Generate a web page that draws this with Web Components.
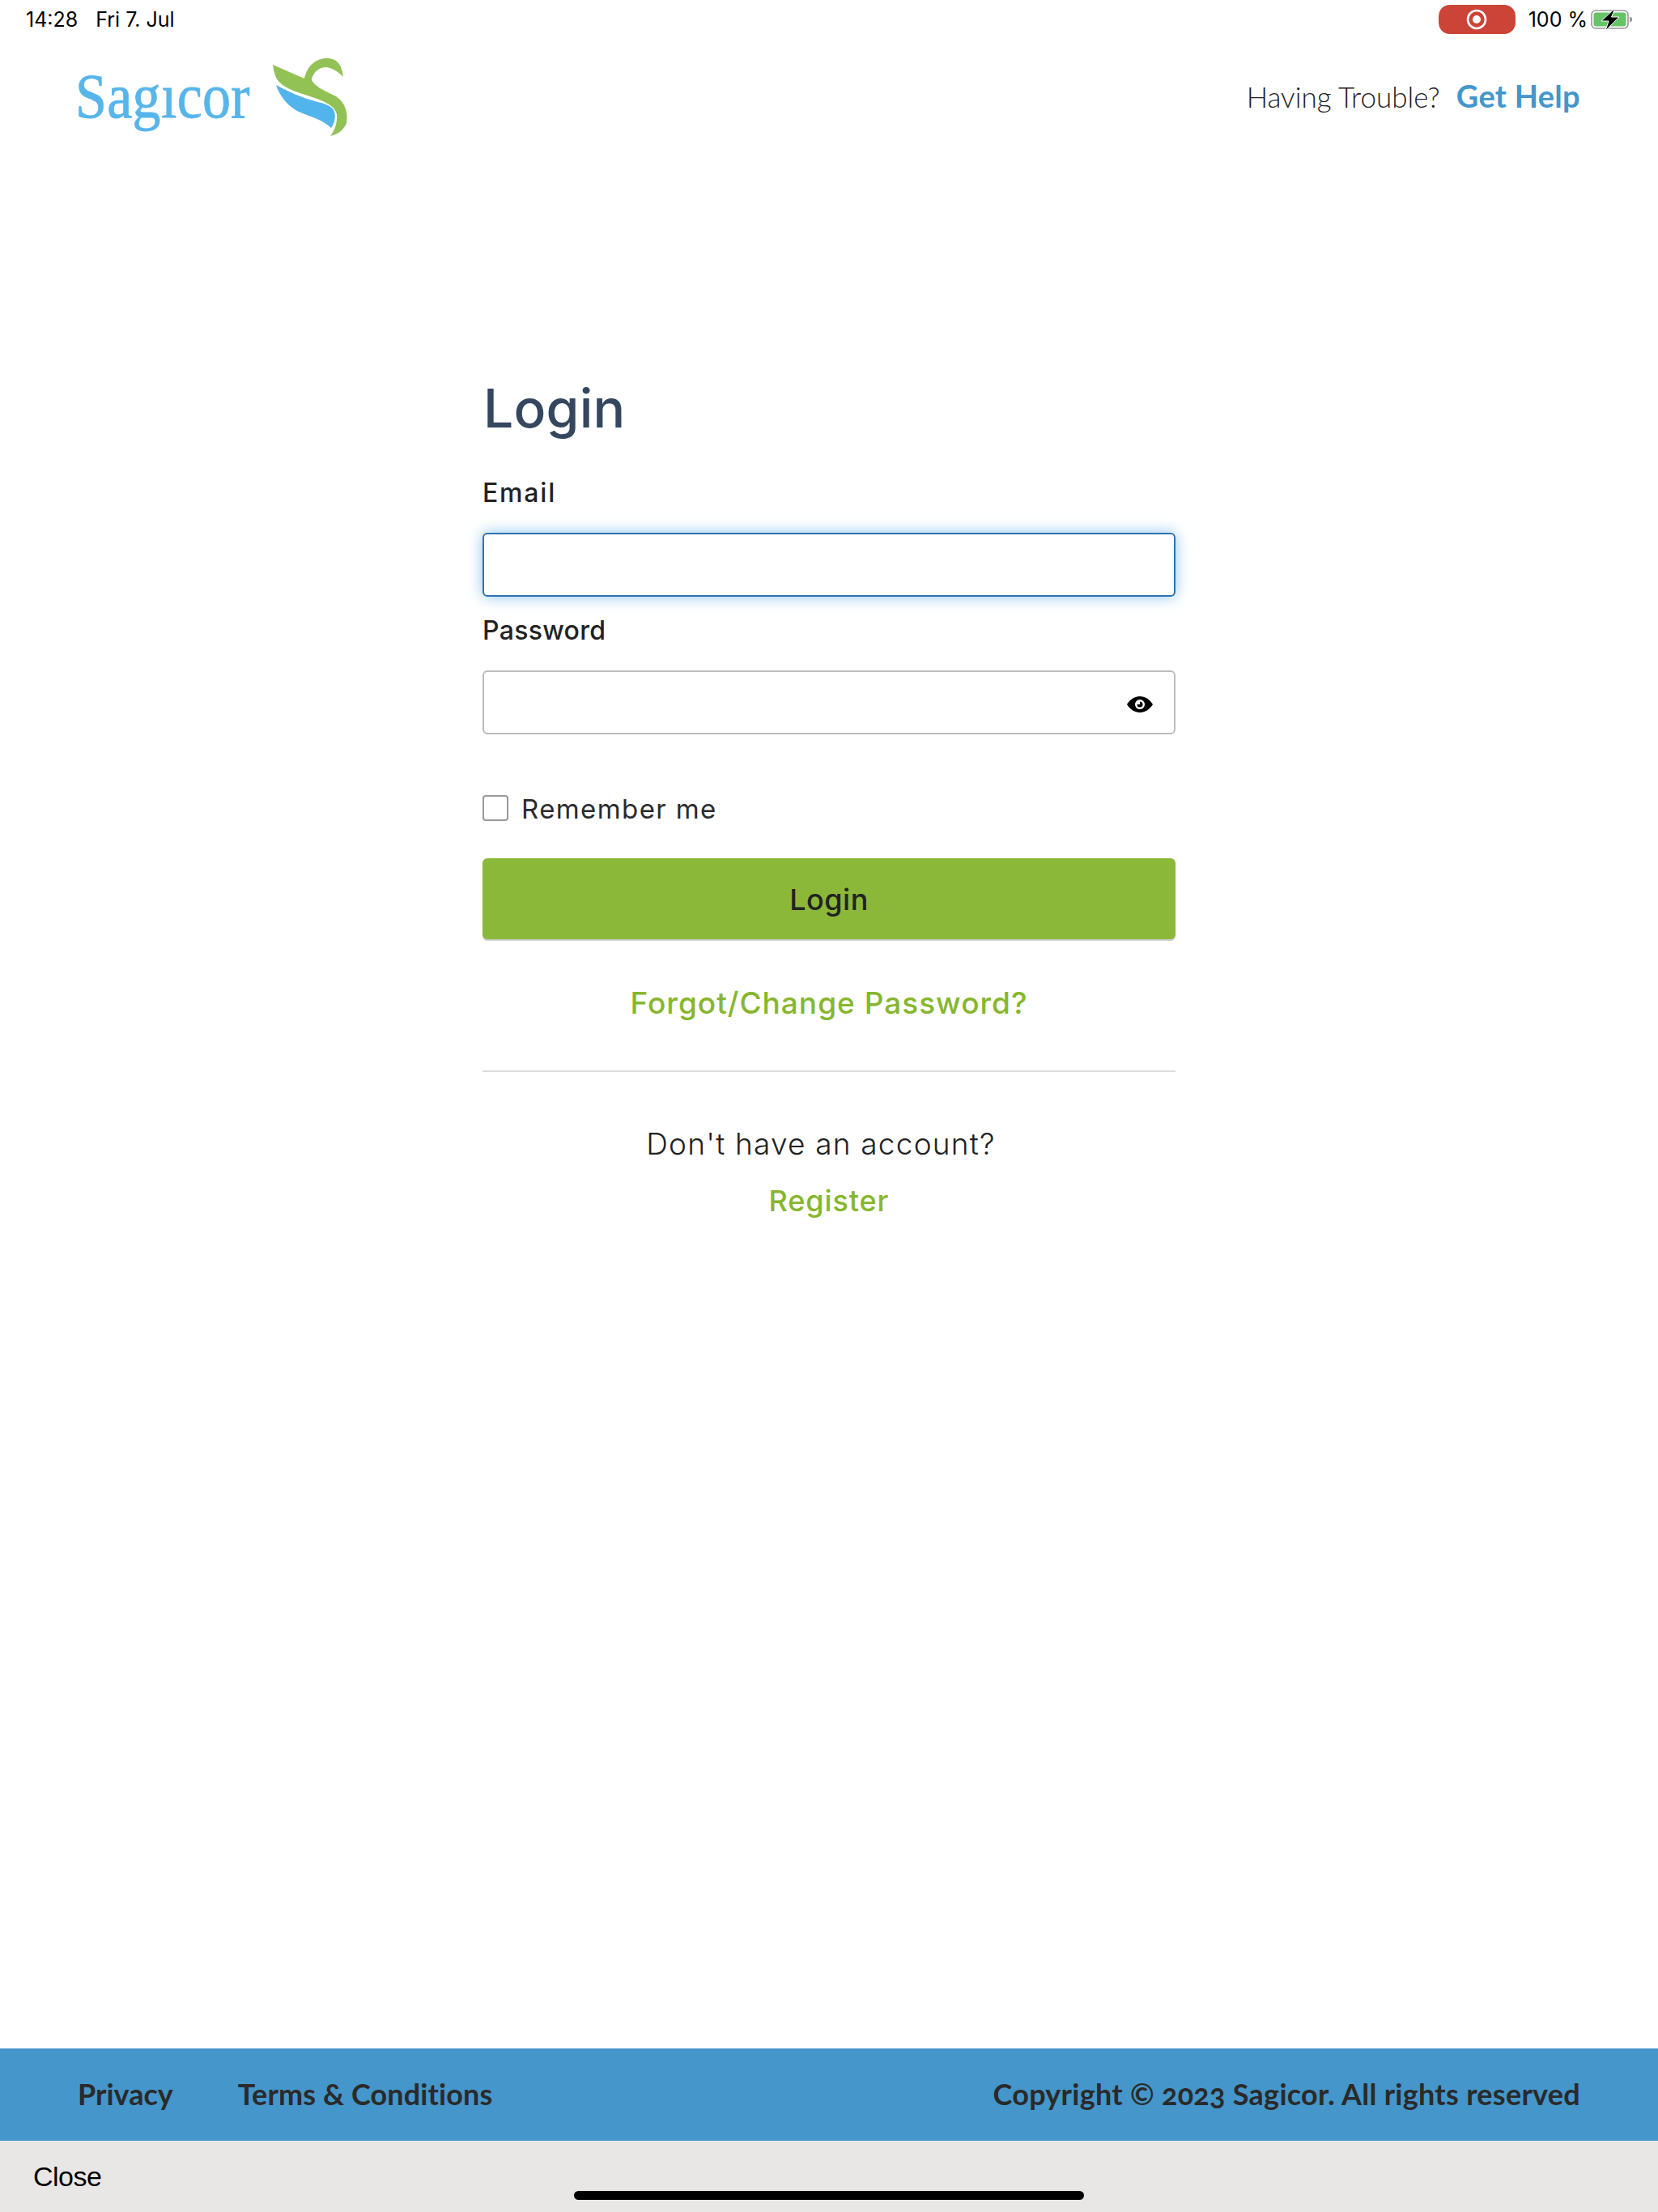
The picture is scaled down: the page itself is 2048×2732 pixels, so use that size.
<!DOCTYPE html>
<html lang="en">
<head>
<meta charset="utf-8">
<title>Sagicor Login</title>
<style>
html, body { margin: 0; padding: 0; background: #fff; }
</style>
</head>
<body>
<login-page></login-page>
<script>
class StatusBar extends HTMLElement {
    constructor() {
        super();
        this.attachShadow({ mode: "open" });
        this.shadowRoot.innerHTML = `
			<style>
			:host {
				display: flex;
				justify-content: space-between;
				height: 46px;
				padding: 0 30px 0 32px;
				font: 400 25px/48px Inter, sans-serif;
				color: #000;
			}
			.left { display: flex; gap: 22px; }
			.right { display: flex; align-items: flex-start; }
			.pill {
				display: flex;
				align-items: center;
				justify-content: center;
				width: 95px;
				height: 36px;
				margin: 6px 16px 0 0;
				border-radius: 14px;
				background: #cb4437;
			}
			.battery { margin: 10px 0 0 4px; }
			</style>
			<div class="left"><span>14:28</span><span>Fri 7. Jul</span></div>
			<div class="right">
				<div class="pill">
					<svg width="26" height="26" viewBox="0 0 26 26"><circle cx="13" cy="13" r="11" fill="none" stroke="#fff" stroke-width="2.6"/><circle cx="13" cy="13" r="5" fill="#fff"/></svg>
				</div>
				<span>100 %</span>
				<svg class="battery" width="53" height="28" viewBox="0 0 53 28">
					<rect x="1" y="3" width="45" height="22" rx="5" fill="none" stroke="#999" stroke-width="1.6"/>
					<rect x="3.500" y="5.500" width="40" height="17" rx="3" fill="#65c466"/>
					<path d="M48 10.500c2 .4 3.200 1.800 3.200 3.500s-1.200 3.100-3.200 3.500z" fill="#999"/>
					<path d="M30 0L13 16h9l-4 12L35 11h-9.500z" fill="#000" stroke="#fff" stroke-width="1"/>
				</svg>
			</div>
		`;
    }
}

class SiteHeader extends HTMLElement {
    constructor() {
        super();
        this.attachShadow({ mode: "open" });
        this.shadowRoot.innerHTML = `
			<style>
			:host {
				display: flex;
				justify-content: space-between;
				align-items: flex-start;
				height: 144px;
				padding: 0 96px 0 93px;
			}
			.logo { display: flex; align-items: flex-start; margin-top: 22px; }
			.word {
				font: 400 70px/80px "Liberation Serif", serif;
				letter-spacing: 0.3px;
				color: #57b5ea;
				margin-top: 14px;
				-webkit-text-stroke: 0.7px #57b5ea;
				transform: scaleY(1.12);
				transform-origin: 0 64px;
			}
			.mark { margin-left: 22px; }
			.help {
				display: flex;
				align-items: baseline;
				gap: 20px;
				margin-top: 50px;
				line-height: 44px;
				font-family: Lato, sans-serif;
			}
			.trouble { font-size: 35px; font-weight: 300; color: #222; }
			.get { font-size: 38px; font-weight: 700; letter-spacing: 0.3px; color: #4496cb; }
			</style>
			<div class="logo">
				<span class="word">Sagıcor</span>
				<svg class="mark" width="100" height="104" viewBox="0 0 100 104">
					<path fill="#92c255" d="M6 12L45 29C47 19 54 6 70 4C82 3 91 8 93 27C88 22 80 15 70 15C61 16 55 23 54 31C58 39 70 44 84 51C96 59 99 72 97 84C94 92 87 98 77 100C82 94 86 84 85 73C82 63 72 58 58 53C40 47 20 42 12 31C8 25 7 18 6 12Z"/>
					<path fill="#52b4ec" d="M10 37C25 45 40 52 58 57C70 60 80 63 82 70C84 78 82 84 78 90C68 80 52 76 38 70C26 64 15 52 10 37Z"/>
				</svg>
			</div>
			<div class="help"><span class="trouble">Having Trouble?</span><span class="get">Get Help</span></div>
		`;
    }
}

class FormField extends HTMLElement {
    constructor() {
        super();
        this.attachShadow({ mode: "open" });
        this.shadowRoot.innerHTML = `
			<style>
			:host { display: block; }
			label {
				display: block;
				height: 40px;
				margin-bottom: 29px;
				font: 500 32px/40px Inter, sans-serif;
				letter-spacing: var(--track, 0.3px);
				color: #222;
			}
			.box {
				position: relative;
				box-sizing: border-box;
				height: 79px;
				border: 2px solid #bbb;
				border-radius: 6px;
				background: #fff;
			}
			:host([focused]) .box {
				border-color: #2f72b0;
				box-shadow: 0 0 18px rgba(102, 175, 233, 0.75);
			}
			input {
				box-sizing: border-box;
				width: 100%;
				height: 100%;
				padding: 0 24px;
				border: 0;
				outline: 0;
				background: transparent;
				font: 400 31px Inter, sans-serif;
			}
			.box ::slotted(svg) {
				position: absolute;
				top: 30px;
				right: 26px;
			}
			</style>
			<label></label>
			<div class="box"><input><slot></slot></div>
		`;
    }
    connectedCallback() {
        this.shadowRoot.querySelector("label").textContent = this.getAttribute("label");
        this.shadowRoot.querySelector("input").type = this.getAttribute("type") || "text";
    }
}

class LoginForm extends HTMLElement {
    constructor() {
        super();
        this.attachShadow({ mode: "open" });
        this.shadowRoot.innerHTML = `
			<style>
			:host {
				display: block;
				width: 856px;
				margin: 273px auto 0;
				font-family: Inter, sans-serif;
			}
			h1 {
				margin: 0 0 44px;
				padding-left: 1px;
				font: 500 66px/82px Inter, sans-serif;
				letter-spacing: 0.2px;
				color: #34475f;
			}
			form-field + form-field { margin-top: 22px; }
			.remember {
				display: flex;
				align-items: center;
				gap: 16px;
				height: 32px;
				margin-top: 75px;
				font-size: 33px;
				font-weight: 400;
				letter-spacing: 1.4px;
				line-height: 32px;
				color: #2b2b2b;
			}
			.remember span:last-child { padding-top: 2px; }
			.check {
				box-sizing: border-box;
				width: 32px;
				height: 32px;
				border: 2px solid #999;
				border-radius: 4px;
			}
			button {
				display: block;
				width: 100%;
				height: 100px;
				margin-top: 46px;
				padding-top: 3px;
				border: 0;
				border-radius: 6px;
				background: #8bb839;
				box-shadow: 0 2px 1px #ccc;
				font: 500 36px Inter, sans-serif;
				letter-spacing: 0.5px;
				color: #222;
			}
			.link {
				display: block;
				text-align: center;
				color: #87b62e;
				font-weight: 500;
			}
			.forgot {
				margin-top: 54px;
				font-size: 37px;
				line-height: 50px;
				letter-spacing: 1px;
			}
			hr {
				height: 2px;
				margin: 58px 0 0;
				border: 0;
				background: #ddd;
			}
			.ask {
				margin: 64px 20px 0 0;
				text-align: center;
				font-size: 37px;
				font-weight: 300;
				line-height: 50px;
				letter-spacing: 1.2px;
				color: #222;
			}
			.register {
				margin-top: 23px;
				font-size: 36px;
				line-height: 44px;
				letter-spacing: 0.9px;
			}
			</style>
			<h1>Login</h1>
			<form-field label="Email" focused style="--track: 1.800px"></form-field>
			<form-field label="Password" type="password">
				<svg width="32" height="20" viewBox="0 0 32 20">
					<path d="M0 10C4 3.500 10 0 16 0s12 3.500 16 10c-4 6.500-10 10-16 10S4 16.500 0 10z" fill="#000"/>
					<circle cx="16" cy="10" r="6" fill="#fff"/>
					<path d="M16 6.500a3.500 3.500 0 1 1-3.500 3.500h3.500z" fill="#000"/>
				</svg>
			</form-field>
			<div class="remember"><span class="check"></span><span>Remember me</span></div>
			<button type="button">Login</button>
			<a class="link forgot">Forgot/Change Password?</a>
			<hr>
			<div class="ask">Don't have an account?</div>
			<a class="link register">Register</a>
		`;
    }
}

class SiteFooter extends HTMLElement {
    constructor() {
        super();
        this.attachShadow({ mode: "open" });
        this.shadowRoot.innerHTML = `
			<style>
			:host {
				display: flex;
				justify-content: space-between;
				align-items: center;
				height: 114px;
				padding: 0 96px 3px;
				box-sizing: border-box;
				background: #4496cb;
				font: 700 36px/44px Lato, sans-serif;
				font-variant-numeric: oldstyle-nums;
				color: #2a2a2a;
			}
			.links { display: flex; gap: 80px; }
			.links span:last-child { letter-spacing: 0.1px; }
			.copy { letter-spacing: 0.27px; }
			</style>
			<div class="links"><span>Privacy</span><span>Terms &amp; Conditions</span></div>
			<span class="copy">Copyright © 2023 Sagicor. All rights reserved</span>
		`;
    }
}

class CloseBar extends HTMLElement {
    constructor() {
        super();
        this.attachShadow({ mode: "open" });
        this.shadowRoot.innerHTML = `
			<style>
			:host {
				position: relative;
				display: flex;
				align-items: center;
				height: 88px;
				padding-left: 41px;
				background: #e8e7e6;
				font: 400 34px "Liberation Sans", sans-serif;
				letter-spacing: -0.5px;
				color: #000;
			}
			.home {
				position: absolute;
				left: 709px;
				top: 62px;
				width: 630px;
				height: 11px;
				border-radius: 6px;
				background: #000;
			}
			</style>
			<span>Close</span>
			<div class="home"></div>
		`;
    }
}

class LoginPage extends HTMLElement {
    constructor() {
        super();
        this.attachShadow({ mode: "open" });
        this.shadowRoot.innerHTML = `
			<style>
			:host {
				display: flex;
				flex-direction: column;
				width: 2048px;
				height: 2732px;
				background: #fff;
				overflow: hidden;
			}
			main { flex: 1; }
			</style>
			<status-bar></status-bar>
			<site-header></site-header>
			<main><login-form></login-form></main>
			<site-footer></site-footer>
			<close-bar></close-bar>
		`;
    }
}

customElements.define("status-bar", StatusBar);
customElements.define("site-header", SiteHeader);
customElements.define("form-field", FormField);
customElements.define("login-form", LoginForm);
customElements.define("site-footer", SiteFooter);
customElements.define("close-bar", CloseBar);
customElements.define("login-page", LoginPage);
</script>
</body>
</html>
